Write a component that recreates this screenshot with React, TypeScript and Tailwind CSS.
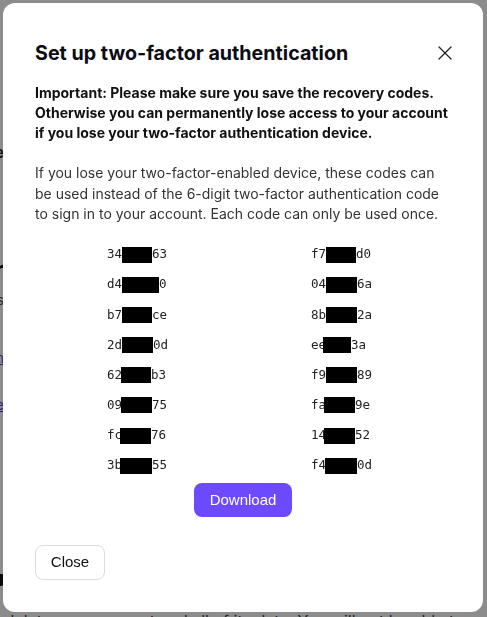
import { X } from 'lucide-react'

type Code = {
  head: string
  tail: string
  box: number
  shift?: number
}

const leftCodes: Code[] = [
  { head: '34', tail: '63', box: 30 },
  { head: 'd4', tail: '0', box: 37 },
  { head: 'b7', tail: 'ce', box: 30 },
  { head: '2d', tail: '0d', box: 31 },
  { head: '62', tail: 'b3', box: 30, shift: -1 },
  { head: '09', tail: '75', box: 31, shift: -1 },
  { head: 'fc', tail: '76', box: 31, shift: -2 },
  { head: '3b', tail: '55', box: 32, shift: -2 },
]

const rightCodes: Code[] = [
  { head: 'f7', tail: 'd0', box: 30 },
  { head: '04', tail: '6a', box: 31 },
  { head: '8b', tail: '2a', box: 31 },
  { head: 'ee', tail: '3a', box: 28, shift: -3 },
  { head: 'f9', tail: '89', box: 31 },
  { head: 'fa', tail: '9e', box: 31, shift: -2 },
  { head: '14', tail: '52', box: 31, shift: -2 },
  { head: 'f4', tail: '0d', box: 32, shift: -1 },
]

function RecoveryCode({ code }: { code: Code }) {
  return (
    <div className="flex h-5 items-center whitespace-pre font-['DejaVu_Sans_Mono',monospace] text-[12.5px] text-[#222]">
      <span>{code.head}</span>
      <span
        className="inline-block h-[16px] bg-black"
        style={{ width: code.box, marginLeft: code.shift ?? 0 }}
      />
      <span>{code.tail}</span>
    </div>
  )
}

function EdgeText({ text, className }: { text: string; className: string }) {
  // bits of the page behind the dialog that peek out on the left
  return (
    <div className="flex w-[4px] shrink-0 justify-end overflow-hidden whitespace-nowrap">
      <span className={className}>{text}</span>
    </div>
  )
}

function BackgroundPage() {
  return (
    <div className="flex h-[617px] flex-col overflow-hidden bg-white font-['Inter',sans-serif] text-[#222]">
      <div className="h-[142px] shrink-0" />
      <EdgeText text="Change" className="text-[16px] font-semibold leading-5" />
      <div className="h-[94px] shrink-0" />
      <EdgeText text="Secur" className="text-[24px] font-bold leading-7 text-[#111]" />
      <div className="h-[6px] shrink-0" />
      <EdgeText text="Keys" className="text-[14px] leading-5 text-[#555]" />
      <div className="h-[38px] shrink-0" />
      <EdgeText text="Learn" className="text-[14px] leading-5 text-[#4b3fd8] underline" />
      <div className="h-[27px] shrink-0" />
      <EdgeText text="Manage" className="text-[14px] leading-5 text-[#4b3fd8] underline" />
      <div className="h-[159px] shrink-0" />
      <div className="-ml-[4px] h-[12px] w-[10px] shrink-0 rounded-full bg-[#111]" />
      <div className="h-[25px] shrink-0" />
      <div className="-ml-[6px] shrink-0 whitespace-nowrap text-[16px] leading-5 text-[#444]">
        r delete your account and all of its data. You will not be able to
      </div>
    </div>
  )
}

export default function App() {
  return (
    <div className="relative h-[617px] w-[487px] overflow-hidden">
      <BackgroundPage />

      <div className="fixed inset-0 bg-black/45 p-[3px] pr-[4px] font-['Inter',sans-serif]">
        <div className="flex h-[609px] flex-col rounded-[12px] bg-white px-8 pt-[36px]">
          <div className="flex items-center justify-between">
            <h1 className="text-[19.7px] font-bold leading-7 text-[#0c0c14]">
              Set up two-factor authentication
            </h1>
            <X size={24} strokeWidth={1.25} className="-mr-[6px] text-[#222]" />
          </div>

          <p className="mt-[16px] text-[14px] font-bold leading-5 text-[#111]">
            Important: Please make sure you save the recovery codes.
            <br />
            Otherwise you can permanently lose access to your account
            <br />
            if you lose your two-factor authentication device.
          </p>

          <p className="mt-[20px] text-[14px] leading-[20.5px] text-[#333]">
            If you lose your two-factor-enabled device, these codes can
            <br />
            be used instead of the 6-digit two-factor authentication code
            <br />
            to sign in to your account. Each code can only be used once.
          </p>

          <div className="ml-[72px] mt-[20px] grid grid-cols-[204px_204px] gap-y-[10.2px]">
            {leftCodes.map((code, i) => (
              <div key={i} className="contents">
                <RecoveryCode code={code} />
                <RecoveryCode code={rightCodes[i]} />
              </div>
            ))}
          </div>

          <div className="mt-[7px] flex justify-center">
            <button className="h-[34px] w-[98px] rounded-lg bg-[#6d4aff] font-['Liberation_Sans',sans-serif] text-[15px] text-white">
              Download
            </button>
          </div>

          <div className="mt-[28px]">
            <button className="h-[35px] w-[70px] rounded-lg border border-[#dcdcdc] bg-white font-['Liberation_Sans',sans-serif] text-[15px] text-[#111]">
              Close
            </button>
          </div>
        </div>
      </div>
    </div>
  )
}
